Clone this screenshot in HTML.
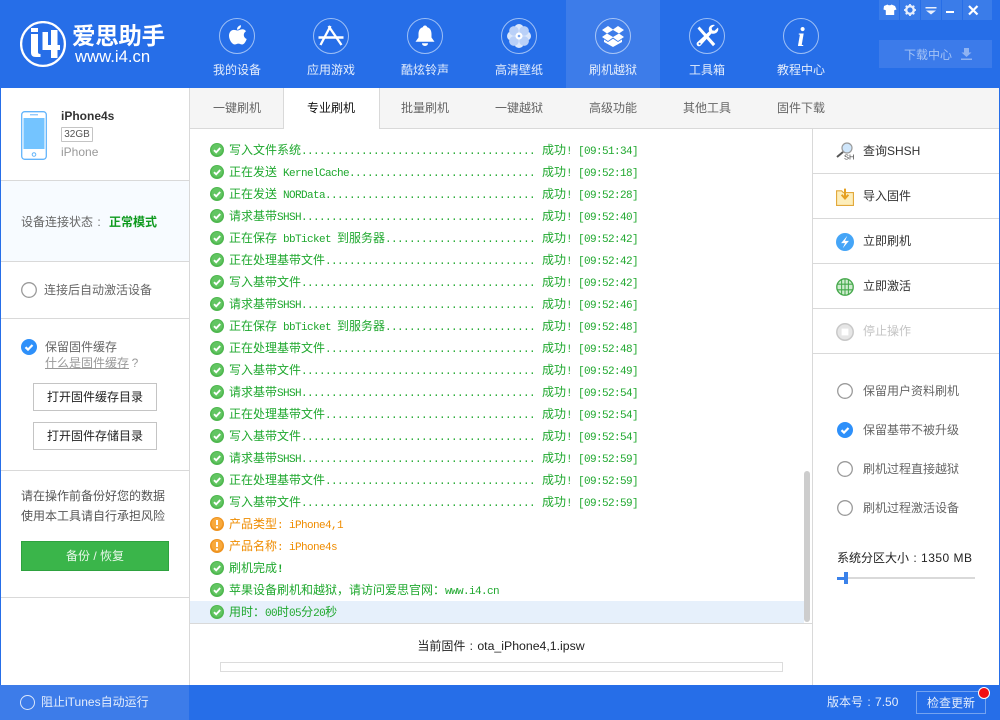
<!DOCTYPE html>
<html lang="zh"><head><meta charset="utf-8"><title>爱思助手</title>
<style>
html,body{margin:0;padding:0}
body{width:1000px;height:720px;overflow:hidden;position:relative;background:#fff;font-family:"Liberation Sans","Noto Sans CJK SC",sans-serif;font-size:12px;color:#333}
.a{position:absolute;white-space:nowrap}
.l{position:absolute;left:0;height:1px;background:#d9d9d9}
.nc{position:absolute;top:18px;width:36px;height:36px}
.nt{position:absolute;top:62px;width:94px;text-align:center;color:#e4edfc;font-size:12px;line-height:16px}
.tab{position:absolute;top:88px;height:40px;line-height:40px;width:94px;text-align:center;color:#666}
.row{position:absolute;left:190px;width:614px;height:22px;line-height:23px;color:#1fa82e;font-family:"Liberation Mono","Noto Sans CJK SC",monospace;font-size:11px}
.row i{font-style:normal;font-family:"Noto Sans CJK SC",sans-serif;font-size:12px;line-height:0;letter-spacing:0}
.row span{position:absolute;top:2px;white-space:pre;letter-spacing:-.6px}
.row .n{left:39px}.row .s{left:352px}.row .t{left:388px}
.row svg{position:absolute;left:20px;top:4px}
.row.o{color:#ef8c00}
.c{display:inline-block;width:12px;text-align:center}
.btn{position:absolute;left:33px;width:122px;height:26px;line-height:26px;border:1px solid #c4c4c4;text-align:center;color:#222}
.ri{position:absolute;left:836px;width:18px;height:18px}
.rt{position:absolute;left:863px;line-height:16px;color:#333}
.wb{position:absolute;top:0;height:20px;background:#3a7ce9}
</style></head><body>
<svg width="0" height="0" style="position:absolute"><defs>
<g id="ok"><circle cx="7" cy="7" r="7" fill="#4fb84f"/><circle cx="7" cy="6.5" r="5.5" fill="#62c562"/><path d="M4 7.2l2.2 2.1L10.2 5" fill="none" stroke="#fff" stroke-width="1.9"/></g>
<g id="wr"><circle cx="7" cy="7" r="7" fill="#ee9320"/><circle cx="7" cy="6.5" r="5.5" fill="#f8a93c"/><path d="M7 3v5M7 9.4v1.8" stroke="#fff" stroke-width="2"/></g>
<g id="ck"><circle cx="8" cy="8" r="8" fill="#2e90fa"/><path d="M4.5 8.2l2.5 2.4L11.5 6" fill="none" stroke="#fff" stroke-width="2.2"/></g>
<g id="ra"><circle cx="8" cy="8" r="7.3" fill="#fff" stroke="#9a9a9a" stroke-width="1.3"/></g>
</defs></svg>

<!-- header -->
<div class="a" style="left:0;top:0;width:1000px;height:88px;background:#266ee8"></div>
<div class="a" style="left:566px;top:0;width:94px;height:88px;background:#3d7ce9"></div>

<svg class="a" style="left:20px;top:21px" width="47" height="47" viewBox="20 21 47 47"><circle cx="43" cy="44" r="21.900" fill="none" stroke="#fff" stroke-width="2.300"/><path d="M31 28h7v4h-7zM31 34h7v18c0 1.500.8 2 2.500 2v3H36c-3.500 0-5-1.500-5-4.500zM42.500 32h5.500v13h3V30h6.500v15h2.500v5h-2.500v8h-6.500v-8h-8.500z" fill="#fff"/></svg>
<div class="a" style="left:72px;top:19px;font-size:23.500px;line-height:34px;font-weight:700;color:#fff;letter-spacing:-.3px">爱思助手</div>
<div class="a" style="left:75px;top:48px;font-size:16.700px;line-height:18px;color:#fff">www.i4.cn</div>

<svg class="nc" style="left:219px" viewBox="0 0 36 36"><circle cx="18" cy="18" r="17.500" fill="none" stroke="#9dbff5"/><path d="M18.300 12.500c1.500 0 3-1.300 5-1.300 1.500 0 2.900.7 3.700 2-3.300 2-2.700 6.400.7 7.800-.9 2.700-2.700 5.500-4.500 5.500-1.500 0-2.200-.9-3.800-.9s-2.400.9-3.800.9c-2.500 0-5.600-4.700-5.600-8.700 0-3.800 2.400-5.900 4.800-5.900 1.500 0 2.700.6 3.500.6zM18 11.800c-.1-2.500 1.900-4.300 4-4.500.2 2.400-1.800 4.500-4 4.500z" fill="#fff"/></svg>
<svg class="nc" style="left:313px" viewBox="0 0 36 36"><circle cx="18" cy="18" r="17.500" fill="none" stroke="#9dbff5"/><path d="M17.500 8L7.500 27M15.500 8l13 19" fill="none" stroke="#fff" stroke-width="2.300"/><path d="M5.500 19.500h25" stroke="#fff" stroke-width="2.600"/></svg>
<svg class="nc" style="left:407px" viewBox="0 0 36 36"><circle cx="18" cy="18" r="17.500" fill="none" stroke="#9dbff5"/><path d="M18 7.500c1.300 0 2 .8 2 1.600 3.200.8 4.500 3.600 4.500 7v3.400l3 4.200H8.500l3-4.200v-3.400c0-3.400 1.300-6.200 4.500-7 0-.8.700-1.600 2-1.600zM15 25.300h6c0 1.700-1.300 2.700-3 2.700s-3-1-3-2.700z" fill="#fff"/></svg>
<svg class="nc" style="left:501px" viewBox="0 0 36 36"><circle cx="18" cy="18" r="17.500" fill="none" stroke="#9dbff5"/><g fill="#dbe7fb"><circle cx="18" cy="10.800" r="4.800"/><circle cx="18" cy="25.200" r="4.800"/><circle cx="10.800" cy="18" r="4.800"/><circle cx="25.200" cy="18" r="4.800"/></g><g fill="#b9d0f8"><circle cx="12.900" cy="12.900" r="4.800"/><circle cx="23.100" cy="12.900" r="4.800"/><circle cx="12.900" cy="23.100" r="4.800"/><circle cx="23.100" cy="23.100" r="4.800"/></g><circle cx="18" cy="18" r="3.500" fill="#fff"/><circle cx="18" cy="18" r="1.300" fill="#7ba6ef"/></svg>
<svg class="nc" style="left:595px" viewBox="0 0 36 36"><circle cx="18" cy="18" r="17.500" fill="none" stroke="#a9c6f6"/><path d="M7 12l6-4 5 3.500L23 8l6 4-5 3.500 5 3.500-6 4-5-3.500L13 23l-6-4 5-3.500zM12 15.500l6 3.500 6-3.500-6-3.500z" fill="#fff"/><path d="M9 21.500V24l9 5 9-5v-2.500l-4 2.500-5-3.200-5 3.200z" fill="#fff"/></svg>
<svg class="nc" style="left:689px" viewBox="0 0 36 36"><circle cx="18" cy="18" r="17.500" fill="none" stroke="#9dbff5"/><path d="M10.500 8.500l15.800 17.500-2.300 2.200L8.500 10.500z" fill="#fff"/><path d="M29 9.500l-3.500 3.200-2.400-.5-.5-2.300L26 7c-3-1-6.200 1-6.200 4.200 0 1 .1 1.500.4 2.200L8 24.500c-1.400 2.500 1.300 4.800 3.500 3.300l11-12.300c3.800 1.300 8-2 6.500-6z" fill="#fff"/><circle cx="10.600" cy="25.800" r="1" fill="#266ee8"/></svg>
<svg class="nc" style="left:783px" viewBox="0 0 36 36"><circle cx="18" cy="18" r="17.500" fill="none" stroke="#9dbff5"/><text x="18" y="28" text-anchor="middle" font-family="Liberation Serif,serif" font-style="italic" font-weight="700" font-size="27" fill="#fff">i</text></svg>

<div class="nt" style="left:190px">我的设备</div>
<div class="nt" style="left:284px">应用游戏</div>
<div class="nt" style="left:378px">酷炫铃声</div>
<div class="nt" style="left:472px">高清壁纸</div>
<div class="nt" style="left:566px">刷机越狱</div>
<div class="nt" style="left:660px">工具箱</div>
<div class="nt" style="left:754px">教程中心</div>

<div class="wb" style="left:879px;width:20px"></div>
<div class="wb" style="left:900px;width:20px"></div>
<div class="wb" style="left:921px;width:20px"></div>
<div class="wb" style="left:942px;width:20px"></div>
<div class="wb" style="left:963px;width:29px"></div>
<svg class="a" style="left:879px;top:0" width="113" height="20" viewBox="0 0 113 20"><path d="M5 6l3.500-1.500c1 1 3 1 4 0L16 6l1.500 3.500-2.300.8V15H6.800v-4.700l-2.300-.8z" fill="#fff"/><circle cx="31" cy="10" r="3.800" fill="none" stroke="#e8effc" stroke-width="2.400"/><path d="M31 4v2M31 14v2M25 10h2M35 10h2M26.800 5.800l1.400 1.400M33.800 12.800l1.400 1.400M26.800 14.200l1.400-1.400M33.800 7.200l1.400-1.400" stroke="#e8effc" stroke-width="1.800"/><path d="M46.500 7h11v1.500h-11zM47 10.500h10l-5 4z" fill="#e8effc"/><path d="M67 11h8v2h-8z" fill="#fff"/><path d="M90 6l8.500 8.500M98.500 6L90 14.500" stroke="#fff" stroke-width="2.200"/></svg>

<div class="a" style="left:879px;top:40px;width:113px;height:28px;background:#3c7bea"></div>
<div class="a" style="left:904px;top:47px;line-height:16px;color:#a5c3f5">下载中心</div>
<svg class="a" style="left:960px;top:47px" width="13" height="14" viewBox="0 0 13 14"><path d="M4 1h5v4.500h2.500L6.500 10 1.500 5.500H4zM1 11.500h11V13H1z" fill="#8fb3f2"/></svg>

<!-- window edges -->
<div class="a" style="left:0;top:88px;width:1px;height:597px;background:#266ee8"></div>
<div class="a" style="left:999px;top:88px;width:1px;height:597px;background:#266ee8"></div>

<!-- tabs -->
<div class="a" style="left:190px;top:88px;width:809px;height:40px;background:#f5f5f5"></div>
<div class="a" style="left:190px;top:128px;width:809px;height:1px;background:#d9d9d9"></div>
<div class="a" style="left:283px;top:88px;width:95px;height:41px;background:#fff;border-left:1px solid #d9d9d9;border-right:1px solid #d9d9d9"></div>
<div class="tab" style="left:190px">一键刷机</div>
<div class="tab" style="left:284px;color:#111">专业刷机</div>
<div class="tab" style="left:378px">批量刷机</div>
<div class="tab" style="left:472px">一键越狱</div>
<div class="tab" style="left:566px">高级功能</div>
<div class="tab" style="left:660px">其他工具</div>
<div class="tab" style="left:754px">固件下载</div>

<!-- left panel -->
<div class="a" style="left:189px;top:88px;width:1px;height:597px;background:#d9d9d9"></div>
<svg class="a" style="left:21px;top:111px" width="26" height="49" viewBox="0 0 26 49"><rect x=".7" y=".7" width="24.600" height="47.600" rx="3" fill="#fff" stroke="#62b4fb" stroke-width="1.300"/><rect x="2.500" y="7" width="21" height="31" fill="#74c4ff"/><path d="M9 3.800h8" stroke="#62b4fb"/><circle cx="13" cy="43.500" r="1.800" fill="none" stroke="#62b4fb"/></svg>
<div class="a" style="left:61px;top:108px;line-height:17px;font-weight:700;color:#333">iPhone4s</div>
<div class="a" style="left:61px;top:127px;width:30px;height:13px;border:1px solid #c4c4c4;border-radius:1px;text-align:center;line-height:14px;font-size:10px;color:#555">32GB</div>
<div class="a" style="left:61px;top:144px;line-height:17px;color:#999">iPhone</div>
<div class="l" style="left:1px;top:180px;width:188px"></div>
<div class="a" style="left:1px;top:181px;width:188px;height:80px;background:#f7fbff"></div>
<div class="a" style="left:21px;top:214px;line-height:17px;color:#666">设备连接状态<span class="c">:</span></div>
<div class="a" style="left:109px;top:214px;line-height:17px;color:#0e9a1e;font-weight:700">正常模式</div>
<div class="l" style="left:1px;top:261px;width:188px"></div>
<svg class="a" style="left:21px;top:282px" width="16" height="16"><use href="#ra"/></svg>
<div class="a" style="left:44px;top:282px;line-height:17px;color:#666">连接后自动激活设备</div>
<div class="l" style="left:1px;top:318px;width:188px"></div>
<svg class="a" style="left:21px;top:339px" width="16" height="16"><use href="#ck"/></svg>
<div class="a" style="left:45px;top:339px;line-height:17px;color:#666">保留固件缓存</div>
<div class="a" style="left:45px;top:356px;line-height:15px;color:#999;text-decoration:underline">什么是固件缓存<span class="c">?</span></div>
<div class="btn" style="top:383px">打开固件缓存目录</div>
<div class="btn" style="top:422px">打开固件存储目录</div>
<div class="l" style="left:1px;top:470px;width:188px"></div>
<div class="a" style="left:21px;top:488px;line-height:17px;color:#555">请在操作前备份好您的数据</div>
<div class="a" style="left:21px;top:508px;line-height:17px;color:#555">使用本工具请自行承担风险</div>
<div class="a" style="left:21px;top:541px;width:146px;height:28px;line-height:28px;background:#3ab54a;border:1px solid #2ea23f;text-align:center;color:#e9f8ea">备份 / 恢复</div>
<div class="l" style="left:1px;top:597px;width:188px"></div>

<!-- log -->
<div class="a" style="left:190px;top:601px;width:614px;height:22px;background:#e6f0fb"></div>
<div class="row" style="top:139px"><svg width="14" height="14"><use href="#ok"/></svg><span class="n"><i>写入文件系统</i>.......................................</span><span class="s"><i>成功</i>!</span><span class="t">[09:51:34]</span></div>
<div class="row" style="top:161px"><svg width="14" height="14"><use href="#ok"/></svg><span class="n"><i>正在发送</i> KernelCache...............................</span><span class="s"><i>成功</i>!</span><span class="t">[09:52:18]</span></div>
<div class="row" style="top:183px"><svg width="14" height="14"><use href="#ok"/></svg><span class="n"><i>正在发送</i> NORData...................................</span><span class="s"><i>成功</i>!</span><span class="t">[09:52:28]</span></div>
<div class="row" style="top:205px"><svg width="14" height="14"><use href="#ok"/></svg><span class="n"><i>请求基带</i>SHSH.......................................</span><span class="s"><i>成功</i>!</span><span class="t">[09:52:40]</span></div>
<div class="row" style="top:227px"><svg width="14" height="14"><use href="#ok"/></svg><span class="n"><i>正在保存</i> bbTicket <i>到服务器</i>.........................</span><span class="s"><i>成功</i>!</span><span class="t">[09:52:42]</span></div>
<div class="row" style="top:249px"><svg width="14" height="14"><use href="#ok"/></svg><span class="n"><i>正在处理基带文件</i>...................................</span><span class="s"><i>成功</i>!</span><span class="t">[09:52:42]</span></div>
<div class="row" style="top:271px"><svg width="14" height="14"><use href="#ok"/></svg><span class="n"><i>写入基带文件</i>.......................................</span><span class="s"><i>成功</i>!</span><span class="t">[09:52:42]</span></div>
<div class="row" style="top:293px"><svg width="14" height="14"><use href="#ok"/></svg><span class="n"><i>请求基带</i>SHSH.......................................</span><span class="s"><i>成功</i>!</span><span class="t">[09:52:46]</span></div>
<div class="row" style="top:315px"><svg width="14" height="14"><use href="#ok"/></svg><span class="n"><i>正在保存</i> bbTicket <i>到服务器</i>.........................</span><span class="s"><i>成功</i>!</span><span class="t">[09:52:48]</span></div>
<div class="row" style="top:337px"><svg width="14" height="14"><use href="#ok"/></svg><span class="n"><i>正在处理基带文件</i>...................................</span><span class="s"><i>成功</i>!</span><span class="t">[09:52:48]</span></div>
<div class="row" style="top:359px"><svg width="14" height="14"><use href="#ok"/></svg><span class="n"><i>写入基带文件</i>.......................................</span><span class="s"><i>成功</i>!</span><span class="t">[09:52:49]</span></div>
<div class="row" style="top:381px"><svg width="14" height="14"><use href="#ok"/></svg><span class="n"><i>请求基带</i>SHSH.......................................</span><span class="s"><i>成功</i>!</span><span class="t">[09:52:54]</span></div>
<div class="row" style="top:403px"><svg width="14" height="14"><use href="#ok"/></svg><span class="n"><i>正在处理基带文件</i>...................................</span><span class="s"><i>成功</i>!</span><span class="t">[09:52:54]</span></div>
<div class="row" style="top:425px"><svg width="14" height="14"><use href="#ok"/></svg><span class="n"><i>写入基带文件</i>.......................................</span><span class="s"><i>成功</i>!</span><span class="t">[09:52:54]</span></div>
<div class="row" style="top:447px"><svg width="14" height="14"><use href="#ok"/></svg><span class="n"><i>请求基带</i>SHSH.......................................</span><span class="s"><i>成功</i>!</span><span class="t">[09:52:59]</span></div>
<div class="row" style="top:469px"><svg width="14" height="14"><use href="#ok"/></svg><span class="n"><i>正在处理基带文件</i>...................................</span><span class="s"><i>成功</i>!</span><span class="t">[09:52:59]</span></div>
<div class="row" style="top:491px"><svg width="14" height="14"><use href="#ok"/></svg><span class="n"><i>写入基带文件</i>.......................................</span><span class="s"><i>成功</i>!</span><span class="t">[09:52:59]</span></div>
<div class="row o" style="top:513px"><svg width="14" height="14"><use href="#wr"/></svg><span class="n"><i>产品类型</i>: iPhone4,1</span></div>
<div class="row o" style="top:535px"><svg width="14" height="14"><use href="#wr"/></svg><span class="n"><i>产品名称</i>: iPhone4s</span></div>
<div class="row" style="top:557px"><svg width="14" height="14"><use href="#ok"/></svg><span class="n"><i>刷机完成</i><b>!</b></span></div>
<div class="row" style="top:579px"><svg width="14" height="14"><use href="#ok"/></svg><span class="n"><i>苹果设备刷机和越狱，请访问爱思官网：</i>www.i4.cn</span></div>
<div class="row" style="top:601px"><svg width="14" height="14"><use href="#ok"/></svg><span class="n"><i>用时：</i>00<i>时</i>05<i>分</i>20<i>秒</i></span></div>

<div class="a" style="left:804px;top:471px;width:6px;height:151px;background:#cdcdcd;border-radius:3px"></div>
<div class="a" style="left:190px;top:623px;width:622px;height:1px;background:#d9d9d9"></div>
<div class="a" style="left:190px;top:638px;width:622px;text-align:center;line-height:17px;color:#222">当前固件<span class="c">:</span><span style="font-size:12.300px">ota_iPhone4,1.ipsw</span></div>
<div class="a" style="left:220px;top:662px;width:561px;height:8px;border:1px solid #dcdcdc"></div>

<!-- right panel -->
<div class="a" style="left:812px;top:129px;width:1px;height:556px;background:#d9d9d9"></div>
<div class="l" style="left:813px;top:173px;width:186px"></div>
<div class="l" style="left:813px;top:218px;width:186px"></div>
<div class="l" style="left:813px;top:263px;width:186px"></div>
<div class="l" style="left:813px;top:308px;width:186px"></div>
<div class="l" style="left:813px;top:353px;width:186px"></div>
<svg class="a" style="left:836px;top:142px" width="20" height="18" viewBox="0 0 20 18"><circle cx="11" cy="6" r="5" fill="#cfe6fb" stroke="#9a9a9a" stroke-width="1.200"/><path d="M7 10l-6 5" stroke="#555" stroke-width="2"/><text x="8" y="17.500" font-size="7.500" font-family="Liberation Sans,sans-serif" fill="#444">SH</text></svg>
<svg class="ri" style="top:188px" viewBox="0 0 16 16" width="16" height="16"><path d="M.5 2.500h4.500l1.500 1.500h9v11.500H.5z" fill="#fdeebb" stroke="#e2a93c"/><path d="M8 .5v8M5 6l3 3.300L11 6" fill="none" stroke="#e5a021" stroke-width="1.800"/></svg>
<svg class="ri" style="top:233px" width="16" height="16" viewBox="0 0 16 16"><circle cx="8" cy="8" r="8" fill="#45a5f7"/><path d="M10 2.500L4.500 9H8l-2 4.500L11.500 7H8z" fill="#fff"/></svg>
<svg class="ri" style="top:278px" width="16" height="16" viewBox="0 0 16 16"><circle cx="8" cy="8" r="7.300" fill="#cfeccf" stroke="#44a84a" stroke-width="1.200"/><path d="M1 5.500h14M1 10.500h14M5 1v14M8 .8v14.400M11 1v14" stroke="#44a84a" stroke-width=".9"/></svg>
<svg class="ri" style="top:323px" width="16" height="16" viewBox="0 0 16 16"><circle cx="8" cy="8" r="7.300" fill="#e6e6e6" stroke="#c8c8c8" stroke-width="1.300"/><rect x="5" y="5" width="6" height="6" fill="#fff"/></svg>
<div class="rt" style="top:143px">查询SHSH</div>
<div class="rt" style="top:188px">导入固件</div>
<div class="rt" style="top:233px">立即刷机</div>
<div class="rt" style="top:278px">立即激活</div>
<div class="rt" style="top:323px;color:#c4c4c4">停止操作</div>
<svg class="a" style="left:837px;top:383px" width="16" height="16"><use href="#ra"/></svg>
<svg class="a" style="left:837px;top:422px" width="16" height="16"><use href="#ck"/></svg>
<svg class="a" style="left:837px;top:461px" width="16" height="16"><use href="#ra"/></svg>
<svg class="a" style="left:837px;top:500px" width="16" height="16"><use href="#ra"/></svg>
<div class="rt" style="top:383px;color:#666">保留用户资料刷机</div>
<div class="rt" style="top:422px;color:#666">保留基带不被升级</div>
<div class="rt" style="top:461px;color:#666">刷机过程直接越狱</div>
<div class="rt" style="top:500px;color:#666">刷机过程激活设备</div>
<div class="a" style="left:837px;top:550px;line-height:17px;color:#222">系统分区大小<span class="c">:</span><span style="letter-spacing:.5px">1350 MB</span></div>
<div class="a" style="left:837px;top:577px;width:138px;height:2px;background:#d9d9d9"></div>
<div class="a" style="left:837px;top:577px;width:8px;height:3px;background:#3b82ea"></div>
<div class="a" style="left:844px;top:572px;width:4px;height:12px;background:#3b82ea"></div>

<!-- footer -->
<div class="a" style="left:0;top:685px;width:1000px;height:35px;background:#266ee8"></div>
<div class="a" style="left:0;top:685px;width:189px;height:35px;background:#3d7ce9"></div>
<div class="a" style="left:20px;top:695px;width:13px;height:13px;border:1.300px solid #dbe7fb;border-radius:50%"></div>
<div class="a" style="left:41px;top:694px;line-height:17px;color:#e4edfc">阻止iTunes自动运行</div>
<div class="a" style="left:827px;top:694px;line-height:17px;color:#e4edfc">版本号<span class="c">:</span>7.50</div>
<div class="a" style="left:916px;top:691px;width:68px;height:21px;border:1px solid #74a3f0;text-align:center;line-height:22px;color:#e4edfc">检查更新</div>
<div class="a" style="left:978px;top:687px;width:10px;height:10px;background:#f20c12;border:1px solid #fff;border-radius:50%"></div>
</body></html>
